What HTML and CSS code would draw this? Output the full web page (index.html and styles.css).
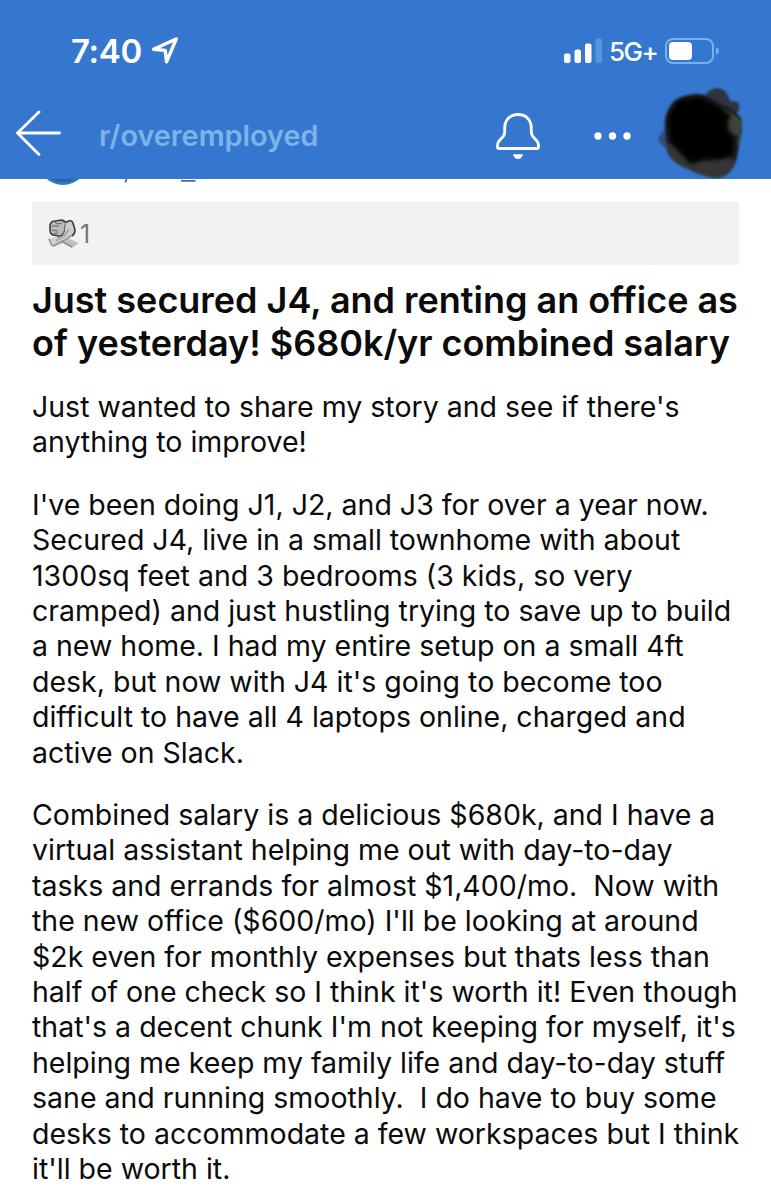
FILE: index.html
```html
<!DOCTYPE html>
<html lang="en">

<head>
    <meta charset="UTF-8">
    <meta name="viewport" content="width=device-width, initial-scale=1.0">
    <title>r/overemployed</title>
    <link rel="stylesheet" href="styles.css">
</head>

<body>
    <header class="header">
        <div class="status-bar">
            <span class="time">7:40</span>
            <svg class="location" width="28" height="28" viewBox="0 0 28 28">
                <path d="M2.5 12.2 25.2 2 15.5 24.8 14.3 13.4Z" />
            </svg>
            <svg class="signal" width="40" height="26" viewBox="0 0 40 26">
                <rect x="1" y="15.5" width="6.5" height="9.5" rx="2" />
                <rect x="11.5" y="11.5" width="6.5" height="13.5" rx="2" />
                <rect x="22" y="5.5" width="6.5" height="19.5" rx="2" />
                <rect class="signal-off" x="32.5" y="0.5" width="6.5" height="24.5" rx="2" />
            </svg>
            <span class="network">5G+</span>
            <svg class="battery" width="55" height="26" viewBox="0 0 55 26">
                <rect class="battery-case" x="1" y="1" width="47" height="24" rx="7" />
                <path class="battery-cap" d="M51 9.5Q54 10.5 54 13T51 16.5Z" />
                <rect class="battery-level" x="4" y="4" width="23" height="18" rx="4" />
            </svg>
        </div>
        <div class="nav-bar">
            <svg class="back" width="46" height="46" viewBox="0 0 46 46">
                <path d="M24 2 2.5 23 24 44.5M2.5 23H44.5" />
            </svg>
            <span class="subreddit">r/overemployed</span>
            <svg class="bell" width="44" height="47" viewBox="0 0 44 47">
                <path d="M22 1.5C14 1.5 8.7 7 8.7 15V19C8.7 26 1.5 25.5 1.5 32.5V34Q1.5 35.5 3 35.5H41Q42.5 35.5 42.5 34V32.5C42.5 25.5 35.3 26 35.3 19V15C35.3 7 30 1.5 22 1.5Z" />
                <path class="clapper" d="M17 41.3H27Q26 46 22 46T17 41.3Z" />
            </svg>
            <svg class="dots" width="38" height="8" viewBox="0 0 38 8">
                <circle cx="4" cy="4" r="3.7" />
                <circle cx="18.5" cy="4" r="3.7" />
                <circle cx="33" cy="4" r="3.7" />
            </svg>
            <svg class="avatar" width="88" height="92" viewBox="656 87 88 92">
                <defs>
                    <filter id="soft" x="-20%" y="-20%" width="140%" height="140%">
                        <feGaussianBlur stdDeviation="1.1" />
                    </filter>
                    <filter id="softer" x="-30%" y="-30%" width="160%" height="160%">
                        <feGaussianBlur stdDeviation="2.4" />
                    </filter>
                </defs>
                <g filter="url(#soft)">
                    <path fill="#2f4f80" d="M668 124 658 138Q659 145 668 149Z" />
                    <path fill="#2b3442" d="M704 97Q709 88 718 88 728 90 730 101L738 102Q741 107 738 112L733 116 700 112Z" />
                    <path fill="#222425" d="M675 101Q686 92 704 95L716 101 733 109 741 118Q743 132 739 146L737 158Q732 177 716 178 703 177 688 169 669 162 666 147L665 123Q666 108 675 101Z" />
                    <path fill="#343534" d="M666 142 672 144 690 163 705 160 730 158 735 161Q730 177 716 178 703 177 688 169 669 162 666 147Z" />
                    <path fill="#3d423b" d="M729 118Q737 115 742 125L738 136Q727 135 727 125Z" />
                    <path fill="none" stroke="#41642f" stroke-width="1.2" d="M722 110Q735 115 740 123M740 133 738 145" />
                </g>
                <path fill="#020202" filter="url(#softer)" d="M676 101 700 96 716 105 729 114 727 129 735 138 734 155 721 159 701 160 691 164 670 142 667 119Z" />
            </svg>
        </div>
    </header>

    <main class="post">
        <!-- bottom edge of the author row, scrolled under the header -->
        <svg class="author" width="180" height="8" viewBox="32 179 180 8">
            <circle cx="63" cy="160" r="25" fill="#3a76c4" />
            <ellipse cx="63" cy="174" rx="16" ry="8" fill="#2862a8" />
            <path d="M126.5 179 125.3 182.5M181 180.8H195.5" stroke="#3a6fae" stroke-width="1.8" />
        </svg>

        <div class="awards">
            <svg class="award" width="33" height="31" viewBox="0 0 33 31">
                <path fill="#c0c0c0" d="M17 18 31.5 25 25 30 12 23Z" />
                <path fill="#d0d0d0" d="M1 21 12 18 20 10 28 12 27 17 18 24 6 29.5Z" />
                <path fill="#bababa" stroke="#3c3c3c" stroke-width="1.6" stroke-linejoin="round" d="M3 7Q4 3 8 3L15 2Q18 3 18 6L18 13Q16 18 12 18L6 17Q3 16 3 12Z" />
                <path fill="#cdcdcd" d="M17 5 22 2 26 5 27 14 22 20 14 21 18 13Z" />
                <path fill="none" stroke="#3c3c3c" stroke-width="1.6" stroke-linejoin="round" d="M16 3 20 4Q24 1 26 5L28 12Q28 16 25 18" />
                <path fill="none" stroke="#666" d="M5 8H12M5 12 11 13M6 16 11 15M8 4 10 6 15 5M18 7 17 14 11 20M19 3 18 7" />
                <path fill="none" stroke="#8f8f8f" stroke-width="1.5" d="M6 28 18 22 25 17M16 24 25 29M2 21 5 28" />
                <path fill="none" stroke="#a8a8a8" stroke-width="2" d="M9 23 17 18 22 11" />
            </svg>
            <span class="award-count">1</span>
        </div>

        <h1 class="title">Just secured J4, and renting an office as<br>
            of yesterday! $680k/yr combined salary</h1>

        <div class="text">
            <p>Just wanted to share my story and see if there's<br>
                anything to improve!</p>
            <p>I've been doing J1, J2, and J3 for over a year now.<br>
                Secured J4, live in a small townhome with about<br>
                1300sq feet and 3 bedrooms (3 kids, so very<br>
                cramped) and just hustling trying to save up to build<br>
                a new home. I had my entire setup on a small 4ft<br>
                desk, but now with J4 it's going to become too<br>
                difficult to have all 4 laptops online, charged and<br>
                active on Slack.</p>
            <p>Combined salary is a delicious $680k, and I have a<br>
                virtual assistant helping me out with day-to-day<br>
                tasks and errands for almost $1,400/mo.&nbsp; Now with<br>
                the new office ($600/mo) I'll be looking at around<br>
                $2k even for monthly expenses but thats less than<br>
                half of one check so I think it's worth it! Even though<br>
                that's a decent chunk I'm not keeping for myself, it's<br>
                helping me keep my family life and day-to-day stuff<br>
                sane and running smoothly.&nbsp; I do have to buy some<br>
                desks to accommodate a few workspaces but I think<br>
                it'll be worth it.</p>
        </div>
    </main>
</body>

</html>
```
FILE: styles.css
```css
* {
    box-sizing: border-box;
}

body {
    margin: 0;
    height: 1200px;
    overflow: hidden;
    background: #fff;
    color: #0b0b0b;
    font-family: Inter, "Liberation Sans", sans-serif;
}

svg {
    display: block;
    flex: none;
}

.header {
    height: 179px;
    background: #3577ce;
    color: #fff;
}

.status-bar {
    display: flex;
    align-items: center;
    height: 87px;
    padding: 14px 51px 0 71px;
}

.time {
    width: 80px;
    font-size: 33px;
    font-weight: 600;
    letter-spacing: -0.3px;
}

.location {
    fill: none;
    stroke: #fff;
    stroke-width: 3.4;
    stroke-linejoin: round;
}

.signal {
    margin-left: auto;
    fill: #fff;
}

.signal-off {
    fill: #5197e0;
}

.network {
    width: 48px;
    margin: 2px 8px 0 6px;
    font-size: 26px;
    font-weight: 500;
    letter-spacing: -1.5px;
    white-space: nowrap;
}

.battery-case {
    fill: none;
    stroke: #77b0ec;
    stroke-width: 2;
}

.battery-cap {
    fill: #77b0ec;
}

.battery-level {
    fill: #fff;
}

.nav-bar {
    display: flex;
    align-items: center;
    height: 92px;
    padding: 0 27px 0 15px;
}

.back {
    fill: none;
    stroke: #fff;
    stroke-width: 2.8;
    stroke-linecap: round;
    stroke-linejoin: round;
}

.subreddit {
    margin: 5px auto 0 38px;
    color: #7eb3ea;
    font-size: 28.8px;
    font-weight: 600;
}

.bell {
    margin: 7px 54px 0 0;
    fill: none;
    stroke: #fff;
    stroke-width: 2.8;
}

.bell .clapper {
    fill: #fff;
    stroke: none;
}

.dots {
    margin: 5px 24px 0 0;
    fill: #fff;
}

.post {
    padding: 0 32px;
}

.awards {
    display: flex;
    align-items: center;
    height: 63px;
    margin-top: 15px;
    padding-left: 15px;
    background: #f2f2f2;
}

.award-count {
    color: #777;
    font-size: 25px;
}

.title {
    margin: 14px 0 0;
    font-size: 36px;
    font-weight: 600;
    line-height: 42.6px;
    letter-spacing: -0.02px;
    white-space: nowrap;
}

.text {
    margin-top: 24.8px;
    font-size: 28.5px;
    line-height: 35.4px;
    white-space: nowrap;
}

.text p {
    margin: 0 0 27px;
}
```
